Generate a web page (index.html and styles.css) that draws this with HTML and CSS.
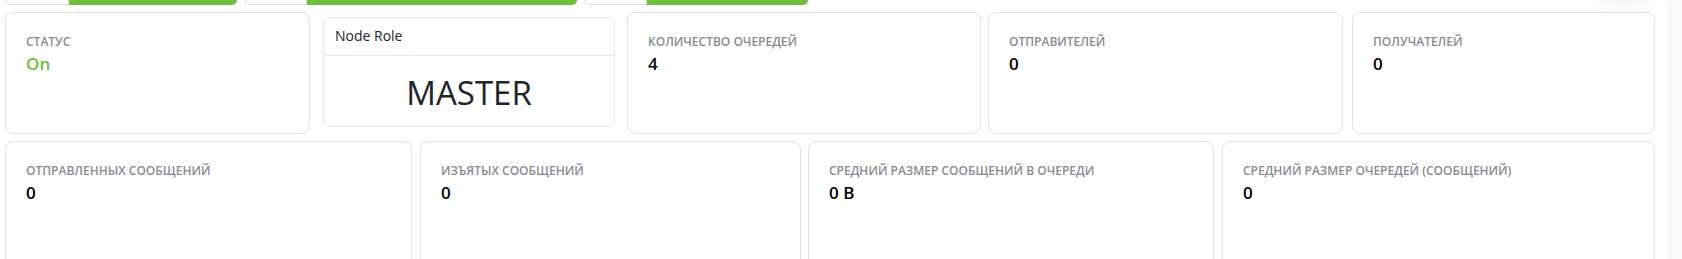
FILE: index.html
```html
<!DOCTYPE html>
<html lang="ru">
<head>
<meta charset="utf-8">
<title>Node overview</title>
<link rel="stylesheet" href="styles.css">
</head>
<body>
<div class="page">
  <main class="content">
    <div class="tabs">
      <div class="tab tab-1"><span class="tab-blank"></span><span class="tab-fill"></span></div>
      <div class="tab tab-2"><span class="tab-blank"></span><span class="tab-fill"></span></div>
      <div class="tab tab-3"><span class="tab-blank"></span><span class="tab-fill"></span></div>
    </div>
    <div class="row row-top">
      <div class="card c-status">
        <div class="label">Статус</div>
        <div class="value value-on">On</div>
      </div>
      <div class="role-card">
        <div class="role-head">Node Role</div>
        <div class="role-body">MASTER</div>
      </div>
      <div class="card c-queues">
        <div class="label">Количество очередей</div>
        <div class="value">4</div>
      </div>
      <div class="card c-senders">
        <div class="label">Отправителей</div>
        <div class="value">0</div>
      </div>
      <div class="card c-receivers">
        <div class="label">Получателей</div>
        <div class="value">0</div>
      </div>
    </div>
    <div class="row row-bottom">
      <div class="card tall c-sent">
        <div class="label">Отправленных сообщений</div>
        <div class="value">0</div>
      </div>
      <div class="card tall c-taken">
        <div class="label">Изъятых сообщений</div>
        <div class="value">0</div>
      </div>
      <div class="card tall c-avgmsg">
        <div class="label">Средний размер сообщений в очереди</div>
        <div class="value">0 В</div>
      </div>
      <div class="card tall c-avgq">
        <div class="label">Средний размер очередей (сообщений)</div>
        <div class="value">0</div>
      </div>
    </div>
    <div class="menu-shadow"></div>
  </main>
  <div class="scrollbar"></div>
</div>
</body>
</html>
```

FILE: styles.css
```css
* { box-sizing: border-box; }
html, body { margin: 0; padding: 0; background: #ffffff; }
body {
  font-family: "Open Sans", "Noto Sans", "Liberation Sans", sans-serif;
  color: #212529;
  height: 259px;
  overflow: hidden;
}
.page { display: flex; height: 259px; }
.content { position: relative; flex: 1; overflow: hidden; }
.scrollbar { width: 15px; background: #f8f9fb; }

.tabs { display: flex; gap: 7px; padding-left: 5px; height: 5px; }
.tab { display: flex; height: 5px; }
.tab-blank {
  background: #fff;
  border: 1px solid #dcdfe3;
  border-top: 0;
  border-radius: 0 0 0 5px;
}
.tab-fill { background: #6ebf3b; border-radius: 0 0 5px 0; }
.tab-1 .tab-blank { width: 64px; } .tab-1 .tab-fill { width: 168px; }
.tab-2 .tab-blank { width: 63px; } .tab-2 .tab-fill { width: 270px; }
.tab-3 .tab-blank { width: 63px; } .tab-3 .tab-fill { width: 161px; }

.row { display: flex; align-items: flex-start; padding-left: 5px; }
.row-top { margin-top: 7px; }
.row-bottom { margin-top: 7px; }

.card {
  flex: none;
  background: #fff;
  border: 1px solid #e1e3e6;
  border-radius: 8px;
  padding: 20px 20px;
  height: 122px;
}
.card.tall { height: 140px; }

.label {
  font-size: 12px;
  font-weight: 600;
  text-transform: uppercase;
  color: #878b94;
  line-height: 18px;
}
.value {
  font-size: 17px;
  font-weight: 600;
  color: #000;
  line-height: 24px;
  margin-top: 1px;
}
.value-on { color: #6ebf3b; }

.c-status { width: 305px; }
.role-card {
  flex: none;
  width: 292px;
  height: 110px;
  margin: 5px 0 0 13px;
  border: 1px solid #e6e8eb;
  border-radius: 6px;
  display: flex;
  flex-direction: column;
}
.role-head {
  font-size: 14px;
  color: #212529;
  padding: 0 11px;
  height: 38px;
  line-height: 36px;
  border-bottom: 1px solid #e6e8eb;
}
.role-body {
  flex: 1;
  display: flex;
  align-items: center;
  justify-content: center;
  font-size: 33px;
  font-weight: 400;
  color: #212529;
  padding-top: 2px;
}
.c-queues { width: 354px; margin-left: 12px; }
.c-senders { width: 355px; margin-left: 7px; }
.c-receivers { width: 303px; margin-left: 9px; }

.c-sent { width: 407px; }
.c-taken { width: 381px; margin-left: 8px; }
.c-avgmsg { width: 406px; margin-left: 7px; }
.c-avgq { width: 433px; margin-left: 8px; }

.menu-shadow {
  position: absolute;
  top: -40px;
  left: 1600px;
  width: 50px;
  height: 40px;
  border-radius: 8px;
  background: #fff;
  box-shadow: 0 4px 28px rgba(0, 0, 0, 0.06);
}
```
